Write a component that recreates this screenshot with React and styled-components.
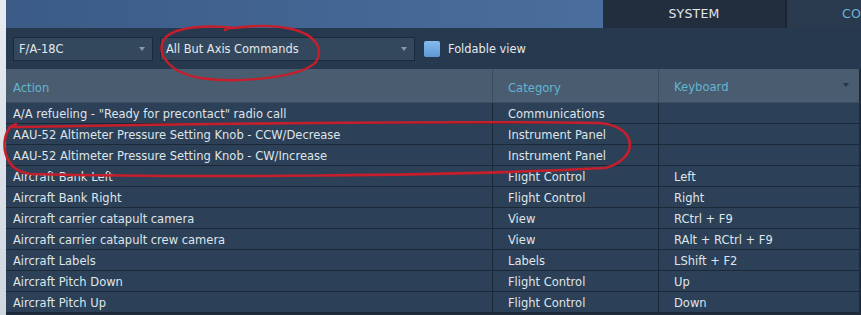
import React from "react";
import styled, { createGlobalStyle } from "styled-components";

const Global = createGlobalStyle`
  html, body { margin: 0; padding: 0; background: #d9dfe6; overflow: hidden; }
  body { font-family: "DejaVu Sans", "Liberation Sans", sans-serif; }
`;

const Page = styled.div`
  position: relative;
  display: flex;
  width: 861px;
  height: 315px;
  overflow: hidden;
`;

const LeftStrip = styled.div`
  width: 6px;
  flex: none;
  background: linear-gradient(180deg, #e6ebf0, #cfd7df);
`;

const Main = styled.div`
  flex: 1;
  display: flex;
  flex-direction: column;
  background: #1f2c3b;
`;

const TopBar = styled.div`
  height: 28px;
  display: flex;
  flex: none;
`;

const Banner = styled.div`
  flex: 1;
  background: linear-gradient(90deg, #3b5b86 0%, #4a6e9d 100%);
`;

const Tab = styled.div`
  width: ${(p) => p.$w}px;
  display: flex;
  align-items: center;
  justify-content: ${(p) => (p.$active ? "center" : "flex-start")};
  padding-left: ${(p) => (p.$active ? 0 : 55)}px;
  box-sizing: border-box;
  background: ${(p) => (p.$active ? "#222e3d" : "#2a3a4e")};
  border-left: ${(p) => (p.$active ? "none" : "2px solid #1b2633")};
  color: ${(p) => (p.$active ? "#e2e7ec" : "#6cb3d6")};
  font-size: 12.5px;
  letter-spacing: 0.2px;
  padding-bottom: 2px;
`;

const Toolbar = styled.div`
  height: 41px;
  flex: none;
  display: flex;
  align-items: center;
  padding-left: 7px;
  background: #27394f;
`;

const Select = styled.div`
  width: ${(p) => p.$w}px;
  height: 24px;
  box-sizing: border-box;
  margin-right: ${(p) => p.$mr}px;
  display: flex;
  align-items: center;
  justify-content: space-between;
  padding: 0 7px 0 5px;
  background: #34485d;
  border: 1px solid #1c2939;
  color: #e3e8ec;
  font-size: 11.4px;
`;

const Arrow = styled.span`
  width: 0;
  height: 0;
  border-left: 3.5px solid transparent;
  border-right: 3.5px solid transparent;
  border-top: 4px solid #8996a4;
`;

const Check = styled.div`
  width: 16px;
  height: 16px;
  border-radius: 2px;
  background: linear-gradient(180deg, #86bbef, #5e98d8);
  margin-right: 8px;
`;

const Label = styled.span`
  color: #e3e8ec;
  font-size: 11.4px;
`;

const Table = styled.div`
  display: flex;
  flex-direction: column;
  width: 854px;
`;

const Row = styled.div`
  display: grid;
  grid-template-columns: 487px 166px 1fr;
  height: ${(p) => (p.$head ? 34 : 21)}px;
  box-sizing: border-box;
  background: ${(p) => (p.$head ? "#4a5c6f" : "#2c4058")};
  border-bottom: 1px solid ${(p) => (p.$head ? "#3d4e60" : "#1b2838")};
  border-right: 1px solid #1b2838;
  flex: none;
`;

const Cell = styled.div`
  display: flex;
  align-items: center;
  justify-content: space-between;
  padding-left: ${(p) => p.$pl}px;
  padding-right: 10px;
  padding-top: ${(p) => (p.$head ? 5 : 1)}px;
  border-right: ${(p) => (p.$last ? "none" : `1px solid ${p.$head ? "#3b4b5c" : "#1b2838"}`)};
  color: ${(p) => (p.$head ? "#62b5d3" : "#dfe5ea")};
  font-size: ${(p) => (p.$head ? 11.6 : 11.5)}px;
  white-space: nowrap;
  overflow: hidden;
`;

const HeadArrow = styled(Arrow)`
  border-top-color: #2a3645;
  margin-top: -3px;
`;

const Annot = styled.svg`
  position: absolute;
  left: 0;
  top: 0;
  pointer-events: none;
`;

const rows = [
  ['A/A refueling - "Ready for precontact" radio call', "Communications", ""],
  ["AAU-52 Altimeter Pressure Setting Knob - CCW/Decrease", "Instrument Panel", ""],
  ["AAU-52 Altimeter Pressure Setting Knob - CW/Increase", "Instrument Panel", ""],
  ["Aircraft Bank Left", "Flight Control", "Left"],
  ["Aircraft Bank Right", "Flight Control", "Right"],
  ["Aircraft carrier catapult camera", "View", "RCtrl + F9"],
  ["Aircraft carrier catapult crew camera", "View", "RAlt + RCtrl + F9"],
  ["Aircraft Labels", "Labels", "LShift + F2"],
  ["Aircraft Pitch Down", "Flight Control", "Up"],
  ["Aircraft Pitch Up", "Flight Control", "Down"],
];

export default function App() {
  return (
    <>
      <Global />
      <Page>
        <LeftStrip />
        <Main>
          <TopBar>
            <Banner />
            <Tab $w={182} $active>SYSTEM</Tab>
            <Tab $w={76}>CO</Tab>
          </TopBar>
          <Toolbar>
            <Select $w={140} $mr={7}>
              <span>F/A-18C</span>
              <Arrow />
            </Select>
            <Select $w={255} $mr={9}>
              <span>All But Axis Commands</span>
              <Arrow />
            </Select>
            <Check />
            <Label>Foldable view</Label>
          </Toolbar>
          <Table>
            <Row $head>
              <Cell $head $pl={7}>Action</Cell>
              <Cell $head $pl={15}>Category</Cell>
              <Cell $head $pl={15} $last style={{ paddingTop: 2 }}>
                <span>Keyboard</span>
                <HeadArrow />
              </Cell>
            </Row>
            {rows.map((r, i) => (
              <Row key={i}>
                <Cell $pl={7}>{r[0]}</Cell>
                <Cell $pl={15}>{r[1]}</Cell>
                <Cell $pl={15} $last>{r[2]}</Cell>
              </Row>
            ))}
          </Table>
        </Main>
        <Annot width="861" height="315" viewBox="0 0 861 315">
          <path
            d="M 234 28 C 210 25, 178 26, 166 37 C 154 50, 166 72, 200 78 C 240 84, 302 77, 316 62 C 324 49, 316 35, 292 29 C 270 24, 252 26, 234 28 Q 229 27, 225 30"
            fill="none"
            stroke="#c61f2b"
            strokeWidth="2.4"
            strokeLinecap="round"
          />
          <path
            d="M 12 127 C 150 125, 400 120, 600 123 C 640 127, 638 160, 605 168 C 450 176, 200 178, 30 174 C 2 170, 0 140, 10 127 L 16 124"
            fill="none"
            stroke="#c61f2b"
            strokeWidth="2.6"
            strokeLinecap="round"
          />
        </Annot>
      </Page>
    </>
  );
}
